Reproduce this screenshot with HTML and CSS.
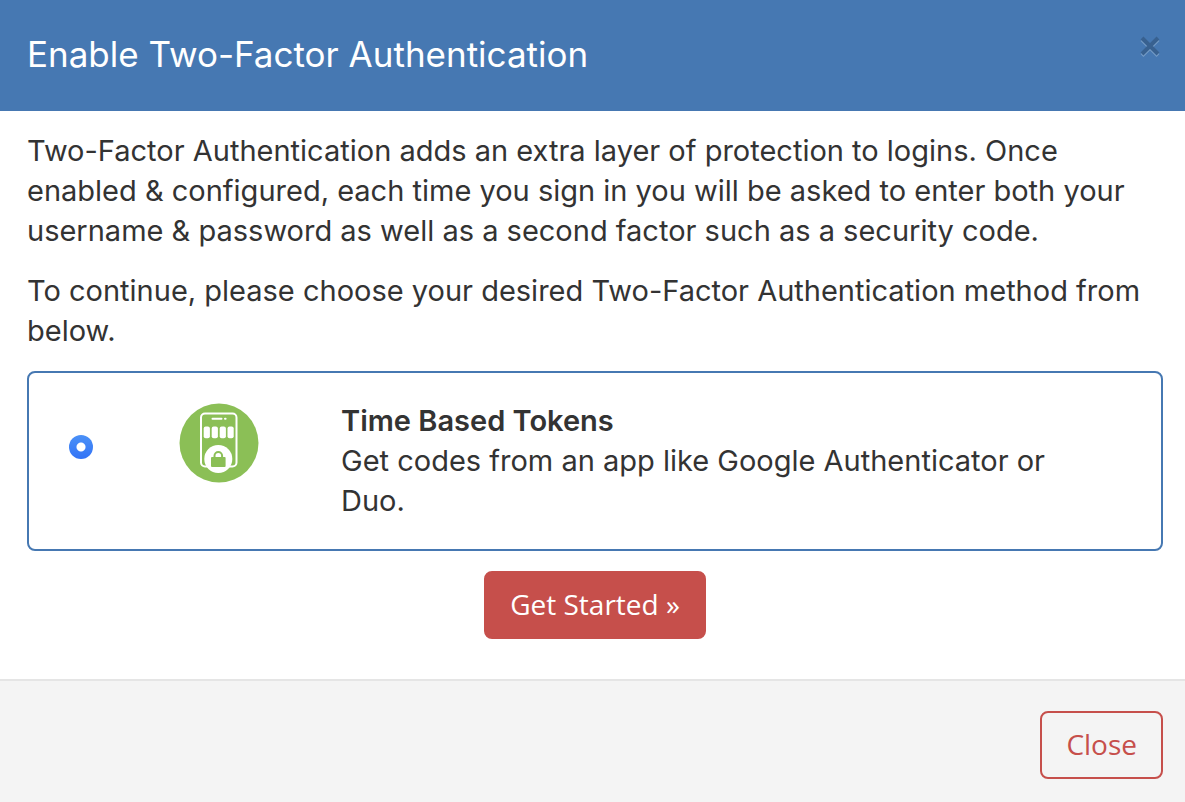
FILE: index.html
```
<!DOCTYPE html>
<html lang="en">
<head>
  <meta charset="UTF-8" />
  <meta name="viewport" content="width=device-width,initial-scale=1" />
  <title>Enable Two-Factor Authentication</title>
  <link rel="stylesheet" href="styles.css">
</head>
<body>
  <form class="modal" role="dialog" aria-labelledby="modalTitle">
    <header class="modal-header">
      <h1 class="modal-title" id="modalTitle">Enable Two-Factor Authentication</h1>
      <button type="button" class="close" aria-label="Close">
        <svg width="22" height="22" viewBox="0 0 22 22" fill="none" stroke-width="4">
          <path d="M3 4.500l16 16M19 4.500L3 20.500" stroke="#759cc7"/>
          <path d="M3 3l16 16M19 3L3 19" stroke="#386190"/>
        </svg>
      </button>
    </header>

    <div class="modal-body">
      <p>Two-Factor Authentication adds an extra layer of protection to logins. Once enabled &amp; configured, each time you sign in you will be asked to enter both your username &amp; password as well as a second factor such as a security code.</p>
      <p>To continue, please choose your desired Two-Factor Authentication method from below.</p>

      <label class="method" for="totp">
        <input type="radio" id="totp" name="method" value="totp" checked>
        <svg class="method-icon" width="80" height="80" viewBox="0 0 80 80">
          <circle cx="40" cy="40" r="39.5" fill="#8bbf56"/>
          <rect x="22" y="10.5" width="35.5" height="53" rx="4" fill="none" stroke="#fff" stroke-width="2"/>
          <path d="M33.500 15.700h9M46 15.700h.6" stroke="#fff" stroke-width="2" stroke-linecap="round"/>
          <g fill="#fff">
            <rect x="24.700" y="23.500" width="6.200" height="11.800" rx="2"/>
            <rect x="32.700" y="23.500" width="6.200" height="11.800" rx="2"/>
            <rect x="40.700" y="23.500" width="6.200" height="11.800" rx="2"/>
            <rect x="48.500" y="23.500" width="6.200" height="11.800" rx="2"/>
            <circle cx="39.300" cy="56" r="14"/>
          </g>
          <rect x="32" y="54" width="14.600" height="10" rx="1" fill="#8bbf56"/>
          <path d="M35.500 55v-2.200a3.800 3.800 0 0 1 7.600 0V55" fill="none" stroke="#8bbf56" stroke-width="2"/>
        </svg>
        <span class="method-text"><strong>Time Based Tokens</strong><br>Get codes from an app like Google Authenticator or Duo.</span>
      </label>

      <div class="actions">
        <button type="submit" class="btn btn-primary">Get Started »</button>
      </div>
    </div>

    <footer class="modal-footer">
      <button type="button" class="btn btn-outline">Close</button>
    </footer>
  </form>
</body>
</html>
```
FILE: styles.css
```
*{box-sizing:border-box}
body{margin:0;background:#f4f4f4;color:#333;
     font-family:Inter,"Open Sans",sans-serif;font-size:29px;line-height:40px}

.modal-header{display:flex;justify-content:space-between;align-items:flex-start;
     padding:29px 24px 32px 27px;background:#4678b2;color:#fff}
.modal-title{margin:0;font-size:35px;font-weight:400;line-height:50px}
.close{display:flex;margin:6px 0 0;padding:0;border:0;background:none;cursor:pointer}

.modal-body{padding:20px 22px 40px 27px;background:#fff}
.modal-body p{margin:0 0 20px}

.method{display:flex;align-items:flex-start;padding:28px 60px 28px 40px;
     border:2px solid #4678b2;border-radius:8px;cursor:pointer}
.method input{flex:none;appearance:none;width:24px;height:24px;margin:34px 86px 0 0;
     border-radius:50%;background:radial-gradient(circle,#fff 4px,transparent 5px),linear-gradient(#4b91f7,#3273f6)}
.method-icon{flex:none;margin:2px 82px 0 0}
.method-text{flex:1}
.method strong{font-weight:600}

.actions{margin-top:20px;text-align:center}
.btn{padding:11px 24px 13px;border:2px solid #c64f4b;border-radius:8px;
     font-family:"Open Sans",sans-serif;font-size:28px;line-height:40px;cursor:pointer}
.btn-primary{background:#c64f4b;color:#fff}
.btn-outline{background:none;color:#c64f4b}
.actions .btn{display:inline-block;vertical-align:top}

.modal-footer{display:flex;justify-content:flex-end;padding:30px 22px 23px;
     border-top:2px solid #e5e5e5;background:#f4f4f4}
```
